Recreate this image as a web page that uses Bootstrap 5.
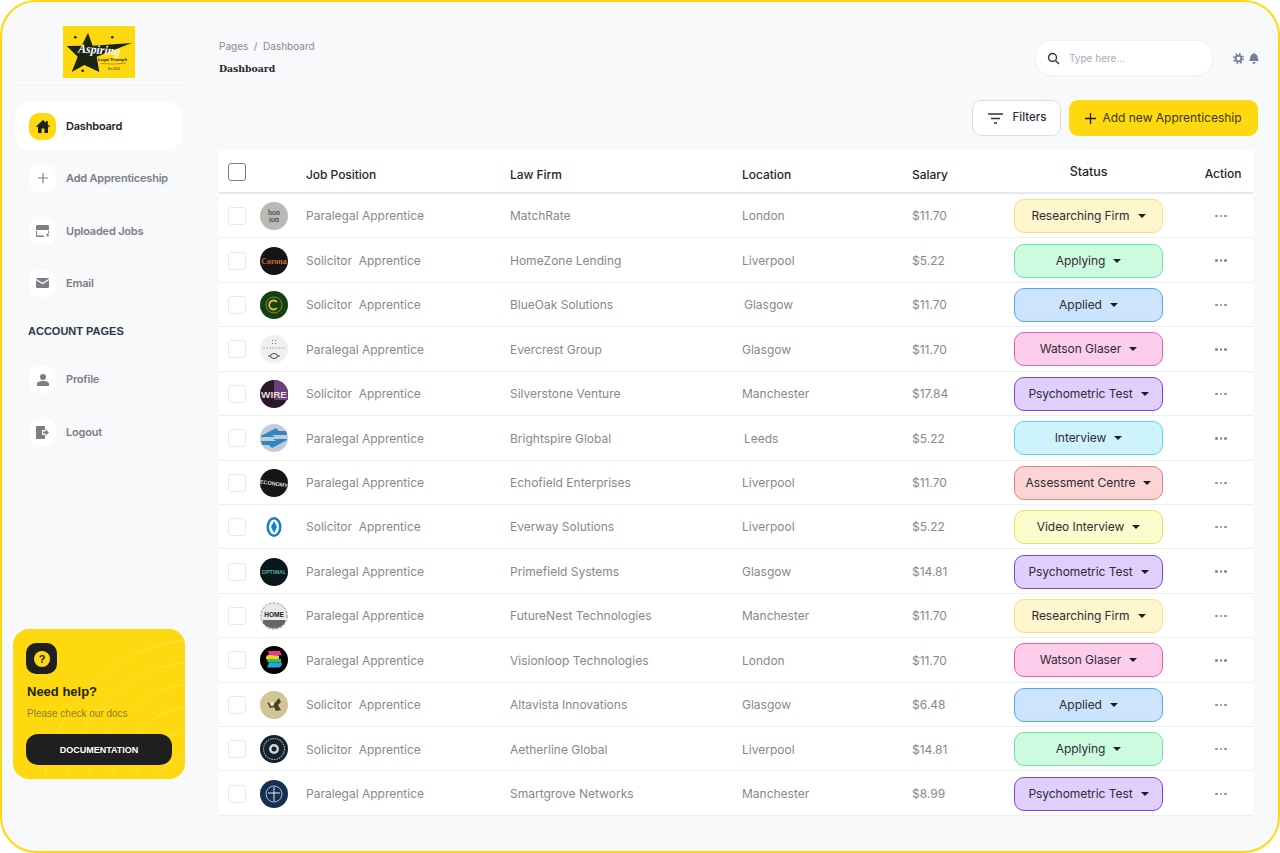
<!doctype html>
<html lang="en">
<head>
<meta charset="utf-8">
<title>Dashboard</title>
<link href="https://cdn.jsdelivr.net/npm/bootstrap@5.3.0/dist/css/bootstrap.min.css" rel="stylesheet">
<style>
html,body{height:853px;margin:0;background:#fff;overflow:hidden}
body{font-family:Inter,"Liberation Sans",sans-serif}
.frame{width:1280px;height:853px;border:2px solid #ffd90f;border-radius:36px;background:#f8f9fb;overflow:hidden}
.side{width:217px;flex:none;padding:24px 0 0 11px}
.logo-wrap{width:172px;height:52px;border-bottom:1px solid #eef0f2;display:flex;justify-content:center;margin-left:0;padding-bottom:7px;box-sizing:content-box}
.navi{width:168px;height:48px;margin-left:2px;padding-left:14px;border-radius:16px;font-size:11px;font-weight:600;color:#7b7f85;letter-spacing:-.2px}
.navi.on{background:#fff;color:#1f2329;margin-top:16px;margin-bottom:4.4px}
.navi.plain{margin-bottom:4.4px}
.ico{width:27px;height:27px;border-radius:10px;background:#fff;margin-right:10px;flex:none;display:flex;align-items:center;justify-content:center}
.on .ico{background:#ffd90f}
.secthead{font:700 11px "Liberation Sans",sans-serif;color:#2d3748;margin:12px 0 11.5px 15px;height:25px;line-height:25px}
.help{width:172px;height:150px;margin-top:173px;background:#ffd90f;border-radius:16px;padding:14px 13px;position:relative;overflow:hidden}
.help-arcs{position:absolute;left:0;top:0}
.help-in{position:relative}
.help-ico{width:31px;height:31px;background:#1f1f1f;border-radius:10px}
.help h6{font:700 13px "Liberation Sans",sans-serif;color:#221e05;margin:10px 0 0 1px;line-height:15px}
.help p{font:10px "Liberation Sans",sans-serif;color:#8d7d22;margin:9px 0 0 1px;line-height:12px}
.docbtn{display:block;width:146px;height:31px;line-height:27px;padding:0;margin-top:14px;background:#1f1f1f;border-radius:12px;border:0;color:#fff;font:700 9px "Liberation Sans",sans-serif}
.docbtn:hover{background:#1f1f1f;color:#fff}
.main{flex:1;padding:0 25px 0 0;min-width:0}
.topbar{height:62px;padding-top:36px}
.crumb{font-size:10px;color:#858a91;line-height:17px}
.pagehead{font:700 9.3px "DejaVu Serif",serif;color:#22262b;margin:7px 0 0;line-height:14px}
.toolwrap{margin-top:2px}
.searchbox{width:178px;height:36px;background:#fff;border:1px solid #eff1f4;border-radius:16px;margin-right:20px;padding-left:11px}
.searchbox input{border:0;outline:0;background:transparent;font:10px Inter,sans-serif;width:125px;margin-left:9px;padding:0;color:#333}
.searchbox input::placeholder{color:#a4abb6}
.tools{margin-right:-6px;gap:5px;height:36px}
.actions{height:50px;padding-top:36px;box-sizing:content-box;gap:8px}
.btn-filter{width:89px;height:36px;background:#fff;border:1px solid #d9dee5;border-radius:9px;font-size:11.5px;font-weight:500;color:#2e3238;padding:0 0 0 1px;gap:10px}
.btn-filter:hover{background:#fff;color:#2e3238}
.btn-add{width:189px;height:36px;background:#ffd90f;border:0;border-radius:9px;font-size:12px;color:#3b3517;padding:0;margin-right:-5px;gap:6px}
.btn-add:hover{background:#ffd90f;color:#3b3517}
.jobs{table-layout:fixed;width:1034px;background:#fff;margin:0;border-collapse:separate;border-spacing:0;--bs-table-bg:#fff}
.jobs th{height:44px;font-size:12px;font-weight:450;color:#23272d;border-bottom:2px solid #e6e8eb;padding:8px 0 0;vertical-align:middle;background:#fff;letter-spacing:-.05px}
.jobs th.stat{padding-top:2px;font-size:12.5px}
.jobs th.act{padding:6px 0 0 30px}
.jobs th.chk{padding-top:0}
.jobs td{height:44.43px;font-size:12px;font-weight:400;color:#85898f;border-bottom:1px solid #eceef1;padding:1px 0 0;vertical-align:middle;background:#fff}
.jobs td:nth-child(n+3):nth-child(-n+6){padding-top:1.5px}
.jobs td:last-child{padding-left:26px}
.c1{width:41px}.c2{width:46px}.c3{width:204px}.c4{width:232px}.c5{width:170px}.c6{width:102px}.c7{width:149px}.c8{width:90px}
.box{display:block;width:18px;height:18px;margin-left:9px;border:1px solid #e8eaed;border-radius:3px;background:#fff}
th .box{border:1px solid #777b81;border-radius:3px;margin-top:2px}
.ava{display:block;width:28px;height:28px}
.pill{display:flex;align-items:center;justify-content:center;height:34px;width:149px;border-radius:10px;border:1px solid;font-size:12px;color:#2c2c33;letter-spacing:-.05px}
.caret{width:0;height:0;margin-left:8px;border-left:4px solid transparent;border-right:4px solid transparent;border-top:4.5px solid #1c1c1c;flex:none}
.s-res{background:#fef6cd;border-color:#f7e27c}
.s-apg{background:#cdfbe0;border-color:#6fe3a7}
.s-apd{background:#cde4fd;border-color:#5da3ea}
.s-wat{background:#fdcdec;border-color:#ec5bb0}
.s-psy{background:#e0cffc;border-color:#7c45d2}
.s-int{background:#cdf4fd;border-color:#5fd3ea}
.s-ass{background:#fbd5d5;border-color:#e98080}
.s-vid{background:#fbfdcd;border-color:#d9e566}
.dots{display:flex;gap:2px;justify-content:center}
.dots i{display:block;width:2.4px;height:2.4px;border-radius:50%;background:#8a8e93}
.ctr{text-align:center}
</style>
</head>
<body>
<div class="frame d-flex">
  <aside class="side">
    <div class="logo-wrap">
      <svg width="72" height="52" viewBox="0 0 72 52" role="img" aria-label="Aspiring Legal Triumph logo">
        <rect width="72" height="52" fill="#ffd90f"/>
        <path d="M25 7L29.700 19.700 68.700 17 33.700 30.700 36.300 46 21.300 39 8.700 46 14.700 30.700 3.700 20 18.700 19.700z" fill="#1c2412"/>
        <circle cx="12.300" cy="11.300" r="1.300" fill="#1c2412"/><circle cx="49.300" cy="11.300" r="1.300" fill="#1c2412"/><circle cx="19.700" cy="44.700" r="1.300" fill="#1c2412"/>
        <text x="15" y="26.500" font-family="Liberation Serif,serif" font-style="italic" font-weight="700" font-size="12.500" fill="#fff" textLength="42" lengthAdjust="spacingAndGlyphs" transform="rotate(4 15 26)">Aspiring</text>
        <text x="35" y="34.800" font-family="Liberation Sans,sans-serif" font-size="4.200" font-weight="700" fill="#1c2412" textLength="29" lengthAdjust="spacingAndGlyphs">Legal Triumph</text>
        <path d="M38 37.500q12 1.500 25-.5" stroke="#5a5a14" stroke-width=".5" fill="none"/>
        <text x="45" y="43.500" font-family="Liberation Sans,sans-serif" font-size="3" fill="#1c2412">Est 2024</text>
      </svg>
    </div>
    <div class="navi on d-flex align-items-center"><span class="ico"><svg width="14" height="13" viewBox="0 0 14 13"><path d="M7 0L0 6.400l.9.900L2 6.300V13h3.600V8.600h2.800V13H12V6.300l1.100 1 .9-.9-2.200-2V1h-1.900v1.700z" fill="#1f1f1f"/></svg></span>Dashboard</div>
    <div class="navi plain d-flex align-items-center"><span class="ico"><svg width="12" height="12" viewBox="0 0 12 12"><path d="M6 1v10M1 6h10" stroke="#7b7f85" stroke-width="1.200" fill="none"/></svg></span>Add Apprenticeship</div>
    <div class="navi plain d-flex align-items-center"><span class="ico"><svg width="13" height="12" viewBox="0 0 13 12"><path d="M1.500 0h10A1.500 1.500 0 0 1 13 1.500V5H0V1.500A1.500 1.500 0 0 1 1.500 0zM0 6h1v4.500h7V12H1.500A1.500 1.500 0 0 1 0 10.500zM12 6h1v2h-1zM10 9.500h1.300V8.300h1v1.200H13.500v1h-1.200v1.200h-1v-1.200H10z" fill="#7b7f85"/></svg></span>Uploaded Jobs</div>
    <div class="navi plain d-flex align-items-center"><span class="ico"><svg width="13" height="10" viewBox="0 0 13 10"><path d="M1 0h11a1 1 0 0 1 1 .8L6.500 4.800 0 .8A1 1 0 0 1 1 0zM0 2.200l6.500 4 6.500-4V9a1 1 0 0 1-1 1H1a1 1 0 0 1-1-1z" fill="#7b7f85"/></svg></span>Email</div>
    <div class="secthead">ACCOUNT PAGES</div>
    <div class="navi plain d-flex align-items-center"><span class="ico"><svg width="12" height="12" viewBox="0 0 12 12"><circle cx="6" cy="3" r="3" fill="#7b7f85"/><path d="M0 12V9.800C0 8 2.500 7 6 7s6 1 6 2.800V12z" fill="#7b7f85"/></svg></span>Profile</div>
    <div class="navi plain d-flex align-items-center"><span class="ico"><svg width="13" height="13" viewBox="0 0 13 13"><path d="M1 0h7a1 1 0 0 1 1 1v3H6v5h3v3a1 1 0 0 1-1 1H1a1 1 0 0 1-1-1V1a1 1 0 0 1 1-1z" fill="#7b7f85"/><path d="M7 5.500h2.500V3.500l3.500 3-3.500 3v-2H7z" fill="#7b7f85"/></svg></span>Logout</div>
    <div class="help">
      <svg class="help-arcs" width="172" height="150" viewBox="0 0 172 150" fill="none" stroke="#ffe45c" stroke-width=".7">
        <circle cx="190" cy="170" r="50"/><circle cx="190" cy="170" r="72"/><circle cx="190" cy="170" r="94"/><circle cx="190" cy="170" r="116"/><circle cx="190" cy="170" r="138"/><circle cx="190" cy="170" r="160"/>
      </svg>
      <div class="help-in">
        <div class="help-ico d-flex align-items-center justify-content-center"><svg width="16" height="16" viewBox="0 0 16 16"><circle cx="8" cy="8" r="8" fill="#ffd90f"/><text x="8" y="12" text-anchor="middle" font-family="Liberation Sans,sans-serif" font-weight="700" font-size="11" fill="#1f1f1f">?</text></svg></div>
        <h6>Need help?</h6>
        <p>Please check our docs</p>
        <button type="button" class="btn docbtn">DOCUMENTATION</button>
      </div>
    </div>
  </aside>
  <main class="main">
    <div class="topbar d-flex justify-content-between">
      <div>
        <div class="crumb">Pages&nbsp; /&nbsp; Dashboard</div>
        <h1 class="pagehead">Dashboard</h1>
      </div>
      <div class="toolwrap d-flex align-items-start">
        <div class="searchbox d-flex align-items-center">
          <svg width="13" height="13" viewBox="0 0 13 13" fill="none" stroke="#33373d" stroke-width="1.400"><circle cx="5.500" cy="5.500" r="4"/><path d="M8.500 8.500L12 12"/></svg>
          <input type="text" placeholder="Type here..." aria-label="Search">
        </div>
        <div class="tools d-flex align-items-center">
          <svg width="11" height="11" viewBox="0 0 11 11" fill="none" stroke="#718096"><circle cx="5.500" cy="5.500" r="2.900" stroke-width="1.900"/><circle cx="5.500" cy="5.500" r="4.700" stroke-width="1.500" stroke-dasharray="1.850 1.840"/></svg>
          <svg width="10" height="11" viewBox="0 0 10 11"><path d="M5 0a1 1 0 0 1 1 1c2 .4 2.800 2 2.800 4 0 1.500.5 2.300 1.200 3H0c.7-.7 1.200-1.500 1.200-3C1.200 3 2 1.400 4 1a1 1 0 0 1 1-1zM3.700 9h2.600A1.400 1.400 0 0 1 5 11a1.400 1.400 0 0 1-1.300-2z" fill="#718096"/></svg>
        </div>
      </div>
    </div>
    <div class="actions d-flex justify-content-end">
      <button type="button" class="btn btn-filter d-flex align-items-center justify-content-center"><svg width="15" height="11" viewBox="0 0 15 11" fill="none" stroke="#30343a" stroke-width="1.300"><path d="M0 1h15M3 5.500h9M6 10h3"/></svg>Filters</button>
      <button type="button" class="btn btn-add d-flex align-items-center justify-content-center"><svg width="11" height="11" viewBox="0 0 11 11" fill="none" stroke="#1f1f1f" stroke-width="1.300"><path d="M5.500 0v11M0 5.500h11"/></svg>Add new Apprenticeship</button>
    </div>
    <table class="table jobs">
      <colgroup><col class="c1"><col class="c2"><col class="c3"><col class="c4"><col class="c5"><col class="c6"><col class="c7"><col class="c8"></colgroup>
      <thead><tr><th class="chk"><span class="box"></span></th><th></th><th>Job Position</th><th>Law Firm</th><th>Location</th><th>Salary</th><th class="ctr stat">Status</th><th class="ctr act">Action</th></tr></thead>
      <tbody>
      <tr><td><span class="box"></span></td><td><svg class="ava" viewBox="0 0 28 28"><circle cx="14" cy="14" r="14" fill="#b9bab5"/><text x="14" y="13" text-anchor="middle" font-family="Liberation Serif,serif" font-size="8" fill="#2a2a2a">bon</text><text x="14" y="20" text-anchor="middle" font-family="Liberation Serif,serif" font-size="8" fill="#2a2a2a">ton</text></svg></td><td>Paralegal Apprentice</td><td>MatchRate</td><td>London</td><td>$11.70</td><td><span class="pill s-res">Researching Firm<i class="caret"></i></span></td><td><span class="dots"><i></i><i></i><i></i></span></td></tr>
      <tr><td><span class="box"></span></td><td><svg class="ava" viewBox="0 0 28 28"><circle cx="14" cy="14" r="14" fill="#141414"/><text x="14" y="17" text-anchor="middle" font-family="Liberation Serif,serif" font-weight="700" font-size="8" fill="#d0683f">Corona</text></svg></td><td>Solicitor&nbsp; Apprentice</td><td>HomeZone Lending</td><td>Liverpool</td><td>$5.22</td><td><span class="pill s-apg">Applying<i class="caret"></i></span></td><td><span class="dots"><i></i><i></i><i></i></span></td></tr>
      <tr><td><span class="box"></span></td><td><svg class="ava" viewBox="0 0 28 28"><circle cx="14" cy="14" r="14" fill="#14410f"/><circle cx="14" cy="14" r="8" fill="none" stroke="#a3953a" stroke-width=".8"/><path d="M17 11a4.500 4.500 0 1 0 0 6" fill="none" stroke="#d6bf4a" stroke-width="1.800"/></svg></td><td>Solicitor&nbsp; Apprentice</td><td>BlueOak Solutions</td><td>&#8198;Glasgow</td><td>$11.70</td><td><span class="pill s-apd">Applied<i class="caret"></i></span></td><td><span class="dots"><i></i><i></i><i></i></span></td></tr>
      <tr><td><span class="box"></span></td><td><svg class="ava" viewBox="0 0 28 28"><circle cx="14" cy="14" r="14" fill="#f1f0ee"/><path d="M12 5h1v1h-1zM15 5h1v1h-1zM12 8h1v1h-1zM15 8h1v1h-1z" fill="#777"/><path d="M3 13h22" stroke="#a9a9a9" stroke-width="1.200" stroke-dasharray="2 1"/><ellipse cx="14" cy="21" rx="3.500" ry="2.500" fill="none" stroke="#444"/><path d="M8 21h2M18 21h2" stroke="#444"/></svg></td><td>Paralegal Apprentice</td><td>Evercrest Group</td><td>Glasgow</td><td>$11.70</td><td><span class="pill s-wat">Watson Glaser<i class="caret"></i></span></td><td><span class="dots"><i></i><i></i><i></i></span></td></tr>
      <tr><td><span class="box"></span></td><td><svg class="ava" viewBox="0 0 28 28"><circle cx="14" cy="14" r="14" fill="#2b1a2c"/><path d="M14 0a14 14 0 0 1 14 14v6H14z" fill="#6a3f7e"/><text x="14" y="17.500" text-anchor="middle" font-family="Liberation Sans,sans-serif" font-weight="700" font-size="9.500" fill="#e7dccb" textLength="26" lengthAdjust="spacingAndGlyphs">WIRE</text></svg></td><td>Solicitor&nbsp; Apprentice</td><td>Silverstone Venture</td><td>Manchester</td><td>$17.84</td><td><span class="pill s-psy">Psychometric Test<i class="caret"></i></span></td><td><span class="dots"><i></i><i></i><i></i></span></td></tr>
      <tr><td><span class="box"></span></td><td><svg class="ava" viewBox="0 0 28 28"><circle cx="14" cy="14" r="14" fill="#c3ccd6"/><path d="M1 12L16 4l3 3h7l1 4H12l3 2H1zM27 16L12 24l-3-3H2L1 17h15l-3-2h14z" fill="#2f87c6"/></svg></td><td>Paralegal Apprentice</td><td>Brightspire Global</td><td>&#8198;Leeds</td><td>$5.22</td><td><span class="pill s-int">Interview<i class="caret"></i></span></td><td><span class="dots"><i></i><i></i><i></i></span></td></tr>
      <tr><td><span class="box"></span></td><td><svg class="ava" viewBox="0 0 28 28"><circle cx="14" cy="14" r="14" fill="#161616"/><text x="14" y="16.500" text-anchor="middle" font-family="Liberation Sans,sans-serif" font-weight="700" font-size="5.500" fill="#ddd" transform="rotate(8 14 14)">ECONOMY</text></svg></td><td>Paralegal Apprentice</td><td>Echofield Enterprises</td><td>Liverpool</td><td>$11.70</td><td><span class="pill s-ass">Assessment Centre<i class="caret"></i></span></td><td><span class="dots"><i></i><i></i><i></i></span></td></tr>
      <tr><td><span class="box"></span></td><td><svg class="ava" viewBox="0 0 28 28"><ellipse cx="14" cy="14" rx="7.500" ry="10" fill="#0f80c4"/><ellipse cx="14" cy="14" rx="5" ry="7.500" fill="#fff"/><path d="M14 8l3 6-3 6-3-6z" fill="#0f80c4"/></svg></td><td>Solicitor&nbsp; Apprentice</td><td>Everway Solutions</td><td>Liverpool</td><td>$5.22</td><td><span class="pill s-vid">Video Interview<i class="caret"></i></span></td><td><span class="dots"><i></i><i></i><i></i></span></td></tr>
      <tr><td><span class="box"></span></td><td><svg class="ava" viewBox="0 0 28 28"><circle cx="14" cy="14" r="14" fill="#08181a"/><text x="14" y="16" text-anchor="middle" font-family="Liberation Sans,sans-serif" font-weight="700" font-size="5.500" fill="#4fae9d">OPTIMAL</text></svg></td><td>Paralegal Apprentice</td><td>Primefield Systems</td><td>Glasgow</td><td>$14.81</td><td><span class="pill s-psy">Psychometric Test<i class="caret"></i></span></td><td><span class="dots"><i></i><i></i><i></i></span></td></tr>
      <tr><td><span class="box"></span></td><td><svg class="ava" viewBox="0 0 28 28"><circle cx="14" cy="14" r="14" fill="#e9e9e9"/><circle cx="14" cy="14" r="13" fill="none" stroke="#b6625a" stroke-width=".8" stroke-dasharray="2 2"/><path d="M3 18h22v3a14 14 0 0 1-22 0z" fill="#666"/><text x="14" y="15" text-anchor="middle" font-family="Liberation Sans,sans-serif" font-weight="700" font-size="6.500" fill="#222">HOME</text></svg></td><td>Paralegal Apprentice</td><td>FutureNest Technologies</td><td>Manchester</td><td>$11.70</td><td><span class="pill s-res">Researching Firm<i class="caret"></i></span></td><td><span class="dots"><i></i><i></i><i></i></span></td></tr>
      <tr><td><span class="box"></span></td><td><svg class="ava" viewBox="0 0 28 28"><circle cx="14" cy="14" r="14" fill="#000"/><path d="M8 5h12l2 4-13 .5z" fill="#f02fa0"/><path d="M6 12q0-3 3-3l10 .5v3.500H6z" fill="#f4d21f"/><path d="M7 13h14v3.500H9q-2 0-2-3.500z" fill="#35c44a"/><path d="M9 16.500h13q0 5-4 5H7z" fill="#25a5ef"/></svg></td><td>Paralegal Apprentice</td><td>Visionloop Technologies</td><td>London</td><td>$11.70</td><td><span class="pill s-wat">Watson Glaser<i class="caret"></i></span></td><td><span class="dots"><i></i><i></i><i></i></span></td></tr>
      <tr><td><span class="box"></span></td><td><svg class="ava" viewBox="0 0 28 28"><circle cx="14" cy="14" r="14" fill="#d1c497"/><path d="M7 11l6 3 6-7 2 4-3 3 3 5-5 1-2-4-4 1z" fill="#4f4321"/><circle cx="12" cy="13" r="2" fill="#f1ead0"/></svg></td><td>Solicitor&nbsp; Apprentice</td><td>Altavista Innovations</td><td>Glasgow</td><td>$6.48</td><td><span class="pill s-apd">Applied<i class="caret"></i></span></td><td><span class="dots"><i></i><i></i><i></i></span></td></tr>
      <tr><td><span class="box"></span></td><td><svg class="ava" viewBox="0 0 28 28"><circle cx="14" cy="14" r="14" fill="#13222c"/><circle cx="14" cy="14" r="10.500" fill="none" stroke="#a8b4bb" stroke-width="1.200" stroke-dasharray="1.500 1"/><circle cx="14" cy="14" r="5" fill="#cfd4d6"/><circle cx="14" cy="14" r="2.500" fill="#13222c"/></svg></td><td>Solicitor&nbsp; Apprentice</td><td>Aetherline Global</td><td>Liverpool</td><td>$14.81</td><td><span class="pill s-apg">Applying<i class="caret"></i></span></td><td><span class="dots"><i></i><i></i><i></i></span></td></tr>
      <tr><td><span class="box"></span></td><td><svg class="ava" viewBox="0 0 28 28"><circle cx="14" cy="14" r="14" fill="#17304f"/><circle cx="14" cy="14" r="8" fill="none" stroke="#a5bfd8"/><path d="M14 7v14M8 13h12" stroke="#e6eef6" stroke-width="1"/></svg></td><td>Paralegal Apprentice</td><td>Smartgrove Networks</td><td>Manchester</td><td>$8.99</td><td><span class="pill s-psy">Psychometric Test<i class="caret"></i></span></td><td><span class="dots"><i></i><i></i><i></i></span></td></tr>
      </tbody>
    </table>
  </main>
</div>
<script src="https://cdn.jsdelivr.net/npm/bootstrap@5.3.0/dist/js/bootstrap.bundle.min.js"></script>
</body>
</html>
